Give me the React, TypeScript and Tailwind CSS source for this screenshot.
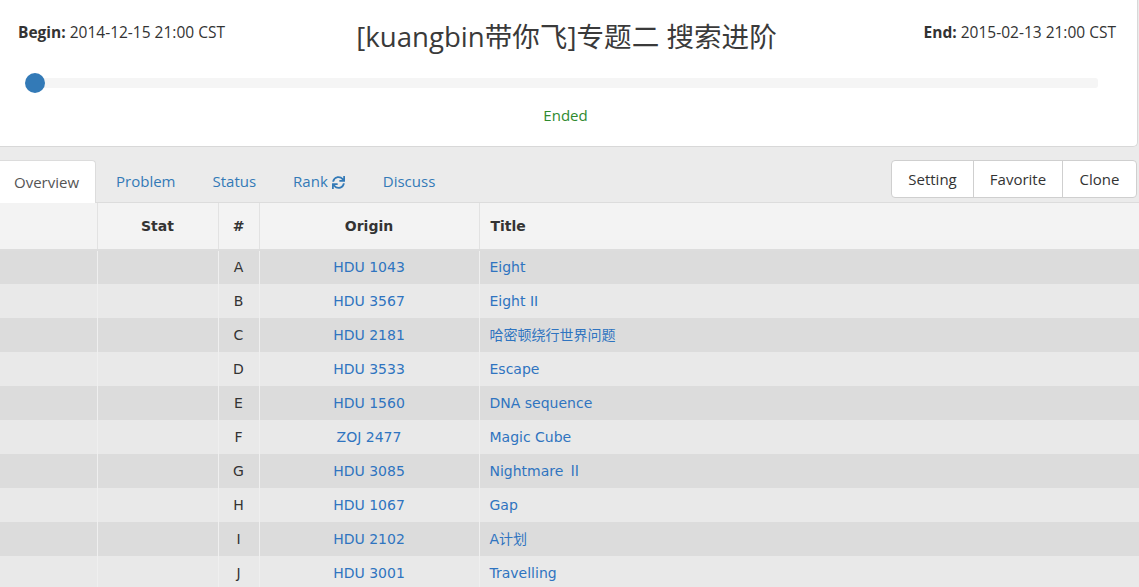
import React from "react";
import { FaSync } from "react-icons/fa";

const rows: [string, string, React.ReactNode][] = [
  ["A", "HDU 1043", "Eight"],
  ["B", "HDU 3567", "Eight II"],
  ["C", "HDU 2181", "哈密顿绕行世界问题"],
  ["D", "HDU 3533", "Escape"],
  ["E", "HDU 1560", "DNA sequence"],
  ["F", "ZOJ 2477", "Magic Cube"],
  ["G", "HDU 3085", <>Nightmare <span className="font-['Noto_Sans_CJK_SC',serif]">Ⅱ</span></>],
  ["H", "HDU 1067", "Gap"],
  ["I", "HDU 2102", "A计划"],
  ["J", "HDU 3001", "Travelling"],
];

const sans = "font-['Open_Sans','Noto_Sans_CJK_SC',sans-serif]";
const verd = "font-['DejaVu_Sans','Noto_Sans_CJK_SC',sans-serif]";

export default function App() {
  return (
    <div className={`w-[1139px] h-[587px] overflow-hidden bg-[#ebebeb] ${sans}`}>
      <div className="w-[1138px] h-[147px] bg-white border-r border-b border-[#d8d8d8] rounded-br-[5px] flex flex-col">
        <div className="grid grid-cols-[1fr_auto_1fr] items-start px-[18px] pt-[21px]">
          <div className="text-[15.5px] leading-[22px] text-[#333]">
            <span className="font-bold">Begin:</span> 2014-12-15 21:00 CST
          </div>
          <div className="text-[27.6px] leading-[32px] text-[#3a3a3a] -mt-[1px] mr-[4px]">
            [kuangbin带你飞]专题二 搜索进阶
          </div>
          <div className="text-[15.5px] leading-[22px] text-[#333] text-right pr-[3px]">
            <span className="font-bold">End:</span> 2015-02-13 21:00 CST
          </div>
        </div>
        <div className="pl-[35px] pr-[39px] mt-[26px]">
          <div className="relative h-[10px] bg-[#f5f5f5] rounded-[3px]">
            <div className="absolute left-[-10px] top-[-5px] w-[20px] h-[20px] rounded-full bg-[#337ab7]" />
          </div>
        </div>
        <div className="text-center text-[15px] leading-[20px] text-[#2f8a2f] mt-[17px] pr-[6px]">Ended</div>
      </div>

      <div className="mt-[13px] h-[43px] flex items-start justify-between border-b border-[#dcdcdc]">
        <div className="flex h-[43px] text-[15px]">
          <div className="h-[43px] pl-[14px] pr-[16px] bg-white border-t border-r border-[#dcdcdc] rounded-tr-[4px] flex items-center text-[#555]">
            Overview
          </div>
          <div className="pl-[20px] pr-[19px] flex items-center text-[#337ab7]">Problem</div>
          <div className="pl-[18px] pr-[18px] flex items-center text-[#337ab7]">Status</div>
          <div className="pl-[19px] pr-[20px] flex items-center text-[#337ab7] gap-[4px]">
            Rank <FaSync className="w-[13px] h-[13px] mt-[1px]" />
          </div>
          <div className="px-[18px] flex items-center text-[#337ab7]">Discuss</div>
        </div>
        <div className="flex h-[38px] mr-[2px] bg-white border border-[#cfcfcf] rounded-[4px] text-[15px] text-[#333]">
          <div className="w-[82px] flex items-center justify-center border-r border-[#cfcfcf]">Setting</div>
          <div className="w-[89px] flex items-center justify-center border-r border-[#cfcfcf]">Favorite</div>
          <div className="w-[73px] flex items-center justify-center">Clone</div>
        </div>
      </div>

      <table className={`w-[1139px] border-collapse table-fixed text-[14px] ${verd}`}>
        <colgroup>
          <col className="w-[97px]" />
          <col className="w-[121px]" />
          <col className="w-[41px]" />
          <col className="w-[220px]" />
          <col />
        </colgroup>
        <thead>
          <tr className="h-[47px] bg-[#f3f3f3] text-[#333] border-b-2 border-[#dddddd]">
            <th></th>
            <th className="border-l border-[#e2e2e2] font-bold">Stat</th>
            <th className="border-l border-[#e2e2e2] font-bold">#</th>
            <th className="border-l border-[#e2e2e2] font-bold">Origin</th>
            <th className="border-l border-[#e2e2e2] font-bold text-left pl-[11px]">Title</th>
          </tr>
        </thead>
        <tbody>
          {rows.map((r, i) => (
            <tr key={r[0]} className={`h-[34px] ${i % 2 === 0 ? "bg-[#dcdcdc]" : "bg-[#e9e9e9]"}`}>
              <td></td>
              <td className="border-l border-[#efefef]"></td>
              <td className="border-l border-[#efefef] text-center text-[#333]">{r[0]}</td>
              <td className="border-l border-[#efefef] text-center text-[#2f74c0]">{r[1]}</td>
              <td className="border-l border-[#efefef] pl-[10px] text-[#2f74c0]">{r[2]}</td>
            </tr>
          ))}
        </tbody>
      </table>
    </div>
  );
}
